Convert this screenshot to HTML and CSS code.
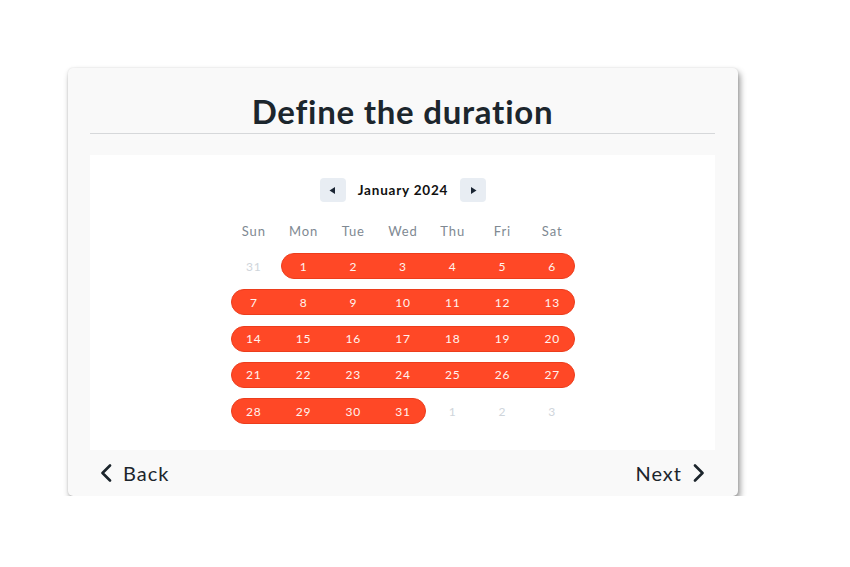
FILE: index.html
```html
<!DOCTYPE html>
<html>
<head>
<meta charset="utf-8">
<link rel="stylesheet" href="styles.css">
</head>
<body>
<div class="page">
  <div class="card">
    <h1 class="title">Define the duration</h1>
    <div class="divider"></div>
    <div class="panel">
      <div class="cal-head">
        <button class="nav-btn" aria-label="Previous month">
          <svg width="9" height="9" viewBox="0 0 9 9"><path d="M7 1 L1.5 4.5 L7 8 Z" fill="#1a2533"/></svg>
        </button>
        <span class="month">January 2024</span>
        <button class="nav-btn" aria-label="Next month">
          <svg width="9" height="9" viewBox="0 0 9 9"><path d="M2 1 L7.5 4.5 L2 8 Z" fill="#1a2533"/></svg>
        </button>
      </div>
      <div class="weekdays">
        <span>Sun</span><span>Mon</span><span>Tue</span><span>Wed</span><span>Thu</span><span>Fri</span><span>Sat</span>
      </div>
      <div class="weeks">
        <div class="week">
          <span class="day out">31</span>
          <div class="pill span6"><span>1</span><span>2</span><span>3</span><span>4</span><span>5</span><span>6</span></div>
        </div>
        <div class="week">
          <div class="pill span7"><span>7</span><span>8</span><span>9</span><span>10</span><span>11</span><span>12</span><span>13</span></div>
        </div>
        <div class="week">
          <div class="pill span7"><span>14</span><span>15</span><span>16</span><span>17</span><span>18</span><span>19</span><span>20</span></div>
        </div>
        <div class="week">
          <div class="pill span7"><span>21</span><span>22</span><span>23</span><span>24</span><span>25</span><span>26</span><span>27</span></div>
        </div>
        <div class="week">
          <div class="pill span4"><span>28</span><span>29</span><span>30</span><span>31</span></div>
          <span class="day out">1</span><span class="day out">2</span><span class="day out">3</span>
        </div>
      </div>
    </div>
    <div class="footer">
      <button class="step">
        <svg width="12" height="18" viewBox="0 0 12 18"><path d="M10 1.5 L2.5 9 L10 16.5" fill="none" stroke="#1c252c" stroke-width="2.6" stroke-linecap="round" stroke-linejoin="round"/></svg>
        <span>Back</span>
      </button>
      <button class="step">
        <span>Next</span>
        <svg width="12" height="18" viewBox="0 0 12 18"><path d="M2 1.5 L9.5 9 L2 16.5" fill="none" stroke="#1c252c" stroke-width="2.6" stroke-linecap="round" stroke-linejoin="round"/></svg>
      </button>
    </div>
  </div>
</div>
</body>
</html>
```

FILE: styles.css
```css
* { box-sizing: border-box; }
html, body { margin: 0; padding: 0; background: #ffffff; }
body { font-family: "Lato", "Open Sans", sans-serif; color: #1c252c; }

.page {
  padding: 68px 0 0 68px;
}

.card {
  width: 670px;
  height: 428px;
  background: #f9f9f9;
  border-radius: 5px;
  box-shadow: 2px 4px 6px rgba(0, 0, 0, 0.42), 0 0 2px rgba(0, 0, 0, 0.12);
  padding: 0 23px 0 22px;
  display: flex;
  flex-direction: column;
}

.title {
  margin: 0;
  padding-top: 23px;
  height: 64px;
  text-align: center;
  font-size: 33px;
  font-weight: 700;
  line-height: 40px;
  color: #1c262d;
  letter-spacing: 0.75px;
}

.divider {
  height: 1px;
  background: #d6d8da;
  margin-top: 1px;
}

.panel {
  margin-top: 21px;
  height: 295px;
  background: #ffffff;
  padding-top: 23px;
  padding-left: 1px;
  display: flex;
  flex-direction: column;
  align-items: center;
}

.cal-head {
  display: flex;
  align-items: center;
  gap: 12px;
  height: 24px;
}

.nav-btn {
  width: 26px;
  height: 24px;
  border: none;
  border-radius: 4px;
  background: #e8edf3;
  padding: 0;
  display: flex;
  align-items: center;
  justify-content: center;
}

.month {
  font-size: 13.5px;
  font-weight: 700;
  color: #111;
  letter-spacing: 0.8px;
}

.weekdays {
  margin-top: 21px;
  width: 348px;
  display: grid;
  grid-template-columns: repeat(7, 1fr);
  font-size: 13px;
  color: #808992;
  letter-spacing: 0.9px;
  text-align: center;
  line-height: 16px;
}

.weeks {
  margin-top: 14px;
  width: 348px;
  display: flex;
  flex-direction: column;
  gap: 10.3px;
}

.week {
  display: grid;
  grid-template-columns: repeat(7, 1fr);
  height: 26px;
}

.day {
  display: flex;
  align-items: center;
  justify-content: center;
  font-size: 12px;
  letter-spacing: 0.8px;
}

.day.out { color: #cfd5db; }

.pill {
  position: relative;
  display: grid;
  color: #fff3ef;
  font-size: 12px;
  letter-spacing: 0.8px;
  z-index: 0;
}

.pill::before {
  content: "";
  position: absolute;
  top: 0;
  bottom: 0;
  left: 2px;
  right: 2px;
  background: #ff4826;
  border: 1px solid #ec3d1c;
  border-radius: 13px;
  z-index: -1;
}

.pill span {
  display: flex;
  align-items: center;
  justify-content: center;
}

.span6 { grid-column: 2 / 8; grid-template-columns: repeat(6, 1fr); }
.span7 { grid-column: 1 / 8; grid-template-columns: repeat(7, 1fr); }
.span4 { grid-column: 1 / 5; grid-template-columns: repeat(4, 1fr); }

.footer {
  display: flex;
  justify-content: space-between;
  align-items: center;
  margin-top: 10px;
  height: 26px;
}

.step {
  border: none;
  background: none;
  padding: 0 10px;
  display: flex;
  align-items: center;
  gap: 11px;
  font-family: "Lato", sans-serif;
  font-size: 20px;
  letter-spacing: 1px;
  color: #1c252c;
}
```
